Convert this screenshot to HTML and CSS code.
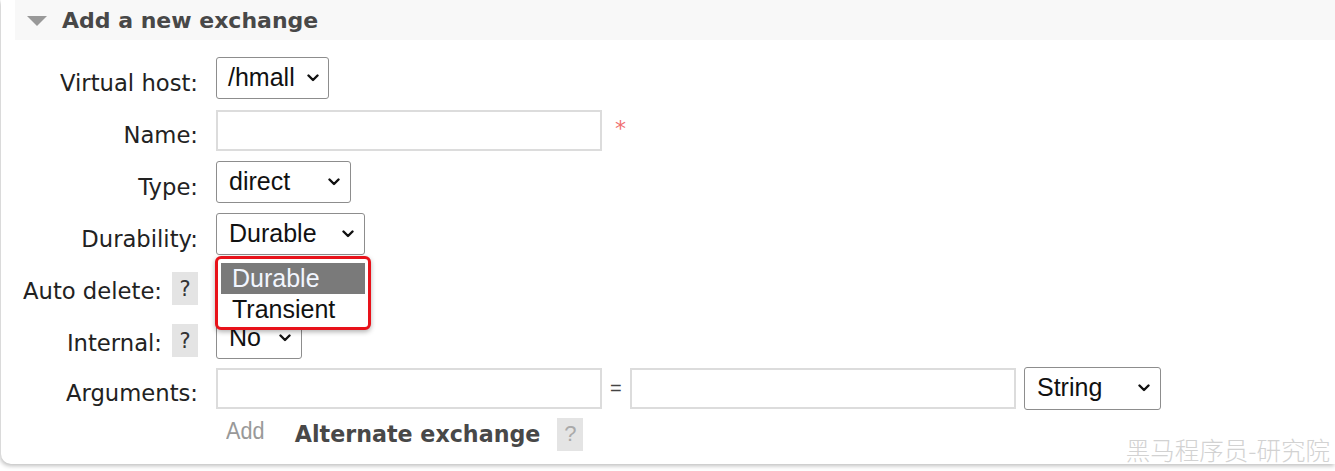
FILE: index.html
```html
<!DOCTYPE html>
<html>
<head>
<meta charset="utf-8">
<link rel="stylesheet" href="styles.css">
</head>
<body>
<div class="panel">
  <div class="header"><span class="tri"></span><h2>Add a new exchange</h2></div>
  <div class="form">
    <div class="row">
      <div class="label">Virtual host:</div>
      <div class="sel w-vhost"><span>/hmall</span><svg class="chev" viewBox="0 0 12 8"><path d="M1.5 1.5 L6 6 L10.5 1.5" /></svg></div>
    </div>
    <div class="row">
      <div class="label">Name:</div>
      <div class="inp w-long"></div>
      <span class="req">*</span>
    </div>
    <div class="row">
      <div class="label">Type:</div>
      <div class="sel w-type"><span>direct</span><svg class="chev" viewBox="0 0 12 8"><path d="M1.5 1.5 L6 6 L10.5 1.5" /></svg></div>
    </div>
    <div class="row">
      <div class="label">Durability:</div>
      <div class="sel w-dur"><span>Durable</span><svg class="chev" viewBox="0 0 12 8"><path d="M1.5 1.5 L6 6 L10.5 1.5" /></svg></div>
    </div>
    <div class="row">
      <div class="label">Auto delete:<span class="help">?</span></div>
      <div class="sel w-no"><span class="hidden">No</span><svg class="chev" viewBox="0 0 12 8"><path d="M1.5 1.5 L6 6 L10.5 1.5" /></svg></div>
    </div>
    <div class="row">
      <div class="label">Internal:<span class="help">?</span></div>
      <div class="sel w-no"><span>No</span><svg class="chev" viewBox="0 0 12 8"><path d="M1.5 1.5 L6 6 L10.5 1.5" /></svg></div>
    </div>
    <div class="row args">
      <div class="label">Arguments:</div>
      <div class="inp w-long"></div>
      <span class="eq">=</span>
      <div class="inp w-long"></div>
      <div class="sel w-str"><span>String</span><svg class="chev" viewBox="0 0 12 8"><path d="M1.5 1.5 L6 6 L10.5 1.5" /></svg></div>
    </div>
    <div class="row addrow">
      <div class="label"></div>
      <span class="add">Add</span>
      <span class="alt">Alternate exchange</span>
      <span class="help help-light">?</span>
    </div>
  </div>
  <div class="dropdown">
    <div class="opt on">Durable</div>
    <div class="opt">Transient</div>
  </div>
  <div class="wm">黑马程序员-研究院</div>
</div>
</body>
</html>
```
FILE: styles.css
```css
html, body { margin: 0; padding: 0; background: #fff; }
body { width: 1335px; height: 471px; overflow: hidden; font-family: "DejaVu Sans", Verdana, sans-serif; }
.panel {
  position: relative;
  width: 1334px;
  height: 464px;
  margin-left: 1px;
  background: #fff;
  border-radius: 0 0 0 10px;
  box-shadow: -1px 2px 4px rgba(0,0,0,0.25);
}
.header {
  margin-left: 14px;
  height: 40px;
  background: #f8f8f8;
  display: flex;
  align-items: center;
}
.tri {
  width: 0; height: 0;
  margin-left: 12px;
  margin-right: 15px;
  border-left: 10px solid transparent;
  border-right: 10px solid transparent;
  border-top: 10px solid #999;
  margin-top: 2px;
}
.header h2 {
  margin: 0;
  font-size: 22px;
  font-weight: bold;
  color: #484848;
}
.form {
  padding-top: 17px;
  display: flex;
  flex-direction: column;
  gap: 10px;
}
.row {
  display: flex;
  align-items: center;
  height: 42px;
}
.args { margin-top: -2px; }
.label {
  width: 197px;
  flex: none;
  display: flex;
  justify-content: flex-end;
  align-items: center;
  font-size: 22.7px;
  color: #222;
  padding-top: 10px;
  box-sizing: border-box;
  height: 42px;
  margin-right: 18px;
  white-space: nowrap;
}
.help {
  display: inline-flex;
  align-items: center;
  justify-content: center;
  width: 26px;
  height: 33px;
  background: #e4e4e4;
  margin-left: 10px;
  font-size: 21px;
  color: #333;
  margin-top: -5px;
}
.sel {
  box-sizing: border-box;
  height: 42px;
  border: 1.5px solid #8d8d8d;
  border-radius: 3px;
  background: #fff;
  display: flex;
  align-items: center;
  justify-content: space-between;
  padding: 0 10px 2px 12px;
  font-family: "Liberation Sans", Arial, sans-serif;
  font-size: 25px;
  color: #111;
}
.hidden { visibility: hidden; }
.chev { width: 12px; height: 8px; fill: none; stroke: #111; stroke-width: 2.4; stroke-linecap: round; stroke-linejoin: round; margin-top: 2px; }
.w-vhost { width: 113px; padding-left: 11px; padding-right: 9px; }
.w-type { width: 135px; }
.w-dur { width: 149px; }
.w-no { width: 86px; }
.w-str { width: 137px; margin-left: 8px; height: 43px; }
.inp {
  box-sizing: border-box;
  height: 41px;
  border: 2px solid #dcdcdc;
  background: #fff;
}
.w-long { width: 386px; }
.req {
  color: #f07070;
  font-size: 22px;
  margin-left: 13px;
  margin-top: -4px;
}
.eq {
  width: 28px;
  text-align: left;
  padding-left: 8px;
  box-sizing: border-box;
  font-family: "Liberation Sans", Arial, sans-serif;
  font-size: 20px;
  color: #444;
}
.addrow { height: 34px; margin-top: -2px; }
.addrow .label { height: 34px; padding-top: 0; }
.add {
  font-family: "Liberation Sans", Arial, sans-serif;
  font-size: 23.5px;
  color: #999;
  margin-left: 10px;
  margin-top: -6px;
  transform: scaleX(0.92);
  transform-origin: left center;
}
.alt {
  font-size: 22.2px;
  font-weight: bold;
  color: #484848;
  margin-left: 27px;
}
.help-light { margin-top: 0; margin-left: 17px; color: #aaa; font-family: "Liberation Sans", Arial, sans-serif; font-size: 22px; }
.dropdown {
  position: absolute;
  left: 214px;
  top: 256px;
  width: 156px;
  height: 74px;
  box-sizing: border-box;
  border: 3px solid #e8121a;
  border-radius: 6px;
  background: #fff;
  padding: 4px 3px 0 3px;
  box-shadow: 0 2px 5px rgba(0,0,0,0.3);
  font-family: "Liberation Sans", Arial, sans-serif;
  font-size: 25px;
}
.opt {
  height: 31px;
  line-height: 30px;
  padding-left: 11px;
  color: #111;
}
.opt.on { background: #7a7a7a; color: #f2f6ff; }
.wm {
  position: absolute;
  right: 5px;
  bottom: -3px;
  font-family: "Noto Sans CJK SC", sans-serif;
  font-weight: 300;
  font-size: 24.5px;
  color: #d2d2d2;
}
```
